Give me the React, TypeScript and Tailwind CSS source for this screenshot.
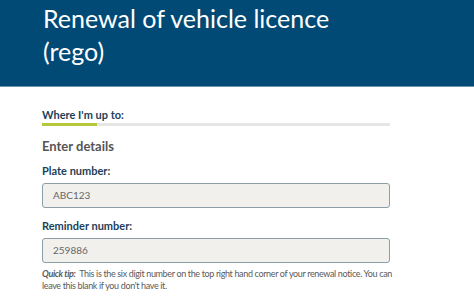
import React from "react";

export default function App() {
  return (
    <div className="w-[474px] h-[298px] overflow-hidden bg-white" style={{ fontFamily: "Lato, 'Open Sans', sans-serif" }}>
      {/* Header */}
      <div className="h-[87px] bg-[#024a76] border-b border-[#6d93ab] pl-[43px] pt-[2px]">
        <h1 className="text-[25px] leading-[33px] text-white font-normal">
          Renewal of vehicle licence
          <br />
          (rego)
        </h1>
      </div>

      {/* Form */}
      <div className="ml-[42px] w-[348px] pt-[21px]">
        <p className="text-[11px] leading-[14px] font-bold text-[#1d3f58]">Where I'm up to:</p>
        <div className="mt-[1px] h-[3px] flex bg-[#e6e6e4]">
          <div className="w-[55px] bg-[#b5c73a]" />
        </div>

        <p className="mt-[12px] text-[13px] leading-[16px] font-bold text-[#555555]">Enter details</p>

        <label className="block mt-[10px] text-[11px] leading-[14px] font-bold text-[#1d3f58]">Plate number:</label>
        <div className="mt-[5px] h-[25px] flex items-center px-[10px] bg-[#f1f0ed] border border-[#8b9ea8] rounded-[3px] text-[10px] text-[#666666]">
          ABC123
        </div>

        <label className="block mt-[11px] text-[11px] leading-[14px] font-bold text-[#1d3f58]">Reminder number:</label>
        <div className="mt-[5px] h-[25px] flex items-center px-[10px] bg-[#f1f0ed] border border-[#8b9ea8] rounded-[3px] text-[10px] text-[#666666]">
          259886
        </div>

        <p className="mt-[5px] w-[358px] text-[9px] leading-[12px] tracking-[-0.35px] text-[#5a5a5a]">
          <em className="font-bold pr-[2px]">Quick tip:</em> This is the six digit number on the top right hand corner of your renewal notice. You can leave this blank if you don't have it.
        </p>
      </div>
    </div>
  );
}
